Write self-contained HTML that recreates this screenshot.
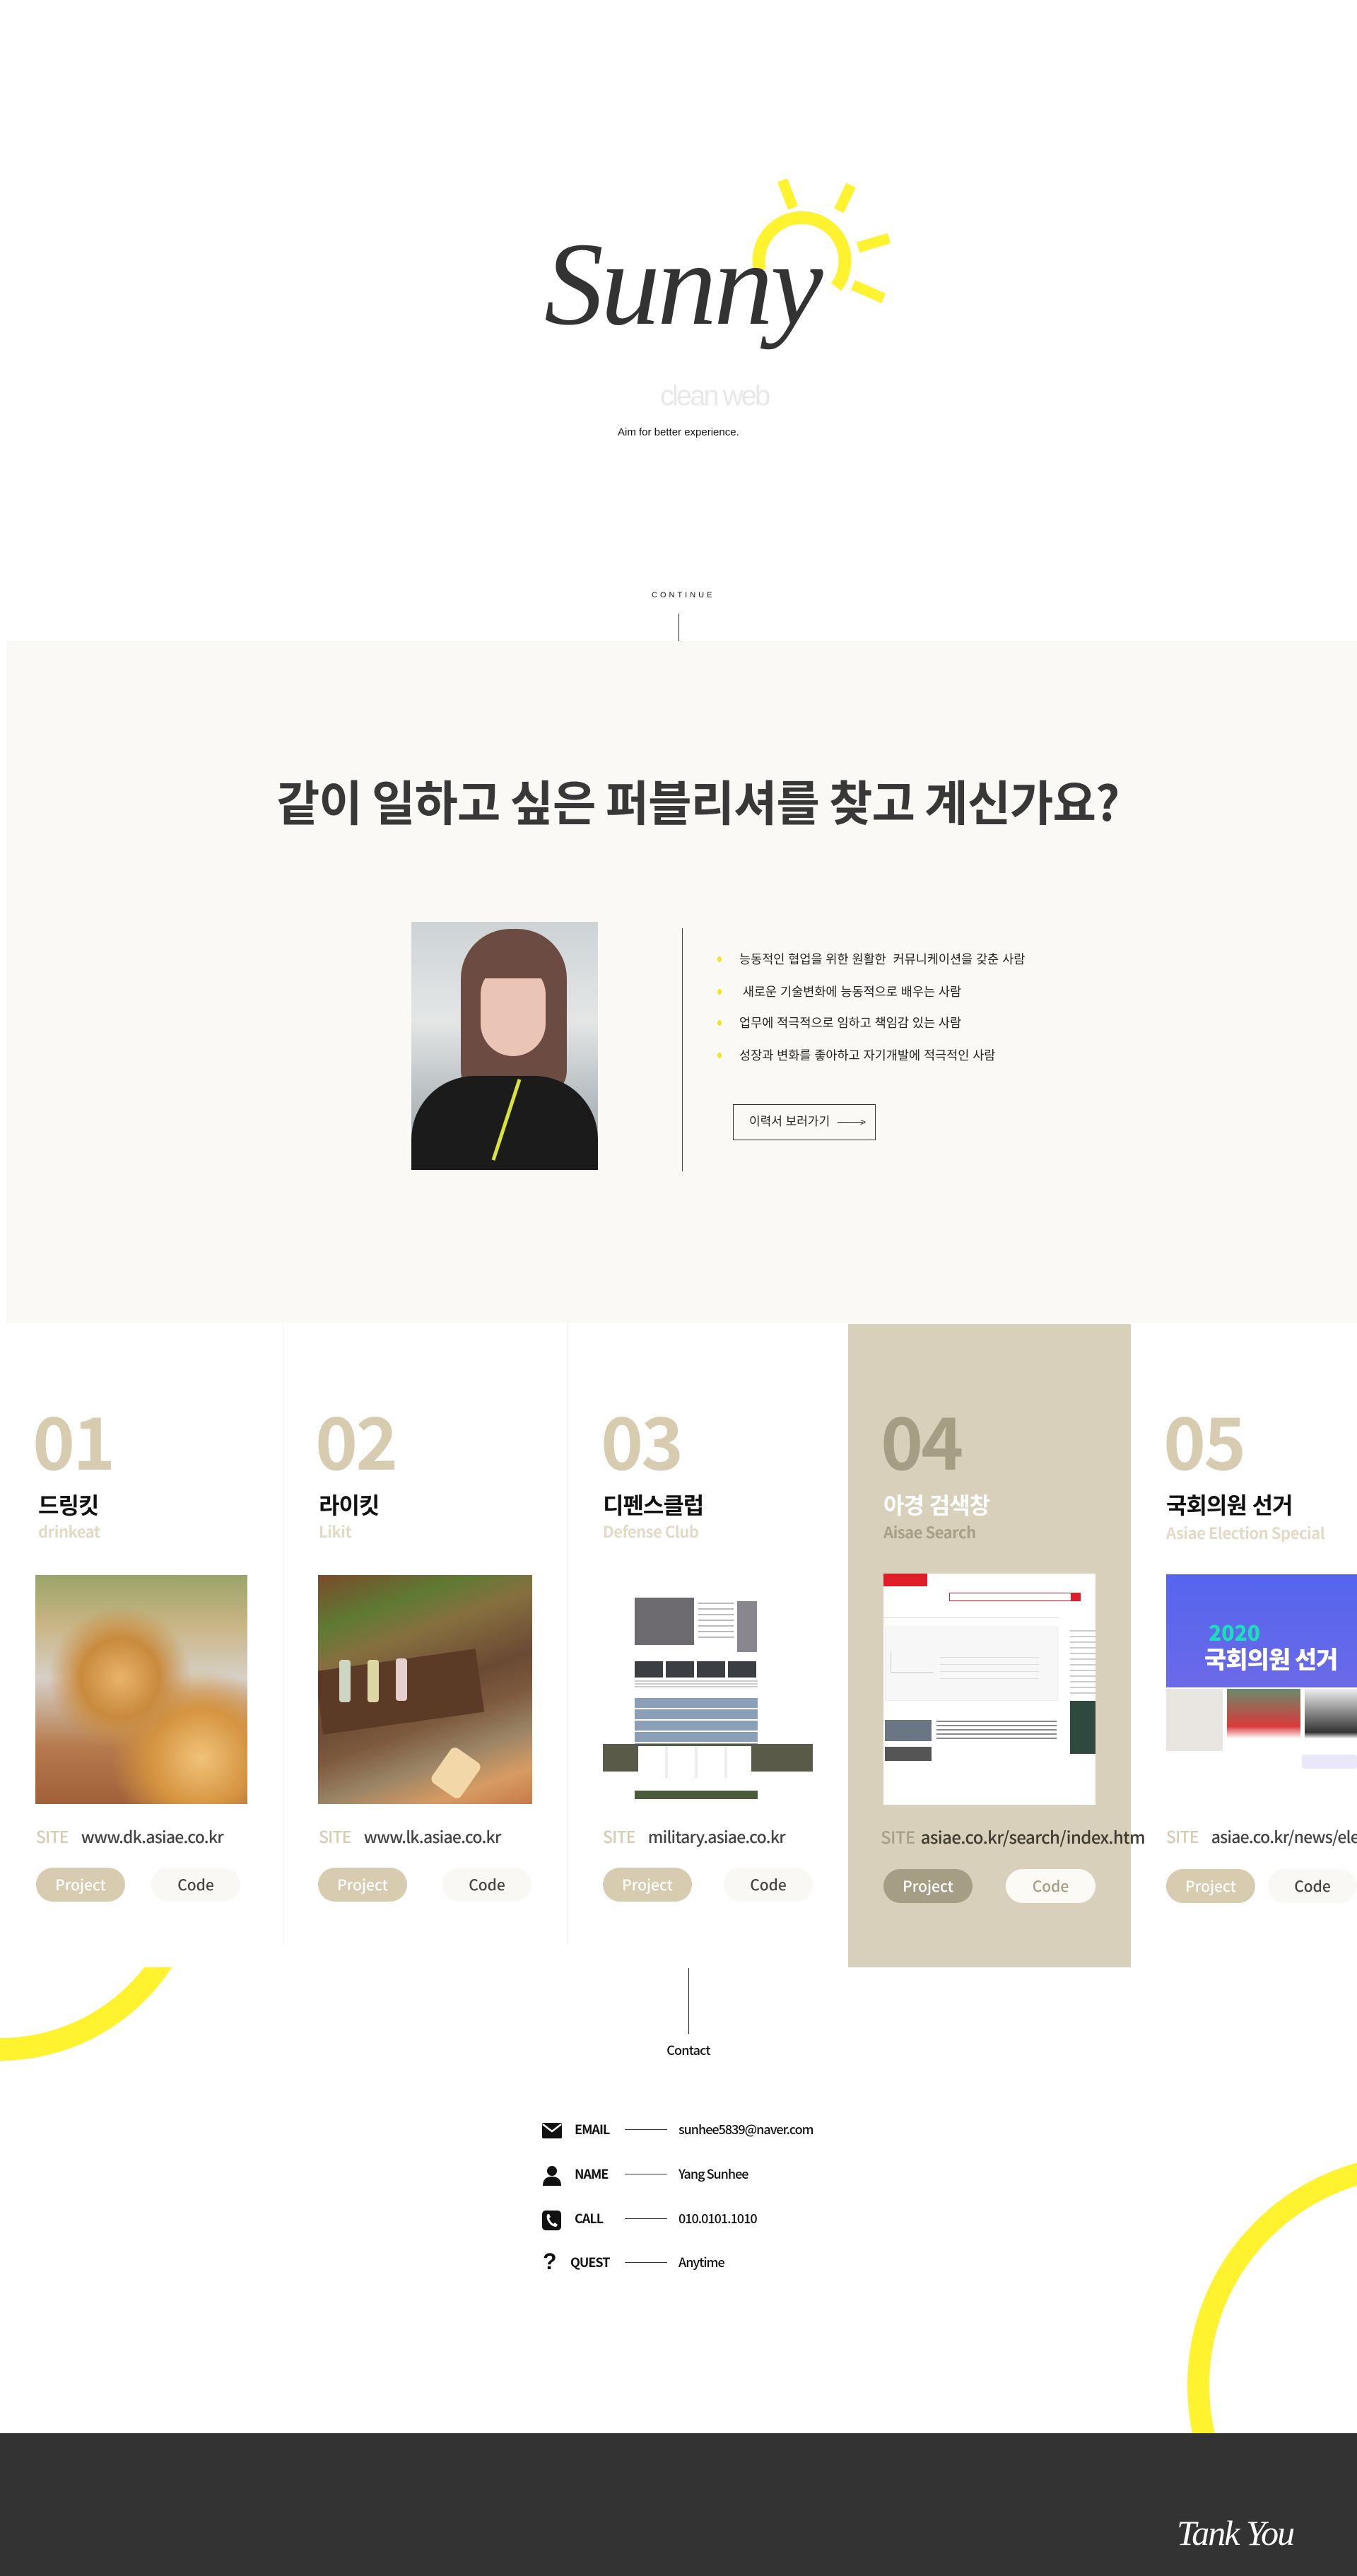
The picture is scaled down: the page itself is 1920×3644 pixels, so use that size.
<!DOCTYPE html>
<html><head><meta charset="utf-8">
<style>
*{margin:0;padding:0;box-sizing:border-box}
html,body{width:1920px;height:3644px;overflow:hidden;background:#fff}
body{position:relative;font-family:"Liberation Sans","Noto Sans CJK KR",sans-serif;color:#222}
.a{position:absolute}
.num{position:absolute;font-family:"Noto Sans CJK KR","Liberation Sans",sans-serif;font-weight:700;font-size:102px;line-height:1;color:#d8ccb0;letter-spacing:-3px}
.ttl{position:absolute;font-family:"Liberation Sans","Noto Sans CJK KR",sans-serif;font-weight:700;font-size:32px;line-height:1;color:#111;letter-spacing:-1px}
.sub{position:absolute;font-family:"Noto Sans CJK KR",sans-serif;font-weight:700;font-size:22px;line-height:1;color:#e3dac6;letter-spacing:-0.5px}
.site{position:absolute;font-family:"Noto Sans CJK KR",sans-serif;font-weight:500;font-size:23px;line-height:1;color:#444;letter-spacing:-0.8px;white-space:nowrap}
.site b{color:#d8ccb0;font-weight:500;margin-right:18px}
.btn{position:absolute;height:48px;width:126px;border-radius:24px;font-family:"Noto Sans CJK KR",sans-serif;font-weight:500;font-size:21px;line-height:48px;text-align:center}
.pj{background:#d8ccb0;color:#fff}
.cd{background:#faf8f4;color:#444}
.img{position:absolute;overflow:hidden}
.li{position:absolute;left:1046px;font-family:"Liberation Sans","Noto Sans CJK KR",sans-serif;font-size:17.5px;color:#222;white-space:nowrap}
.dot{position:absolute;left:1015px;width:6px;height:8px;border-radius:50%;background:#f7e619}
.crow{position:absolute;left:760px;height:30px;width:600px;font-family:"Noto Sans CJK KR",sans-serif;font-weight:700;font-size:18px;letter-spacing:-1px;color:#111}
.crow .lb{position:absolute;left:53px;top:0;line-height:30px}
.crow .ln{position:absolute;left:124px;top:15px;width:60px;height:1px;background:#333}
.crow .vl{position:absolute;left:200px;top:0;line-height:30px;font-weight:500}
.crow svg{position:absolute;left:6px;top:3px}
</style></head><body>

<!-- HERO -->
<svg class="a" style="left:0;top:0" width="1920" height="560">
  <g stroke="#fff22e" fill="none">
    <path d="M1075 382 A61 61 0 1 1 1183 406" stroke-width="18"/>
    <line x1="1107" y1="255" x2="1122" y2="294" stroke-width="15"/>
    <line x1="1204" y1="262" x2="1187" y2="298" stroke-width="15"/>
    <line x1="1258" y1="337" x2="1214" y2="350" stroke-width="15"/>
    <line x1="1207" y1="403" x2="1250" y2="422" stroke-width="15"/>
  </g>
</svg>
<div class="a" style="left:770px;top:318px;font-family:'Liberation Serif',serif;font-style:italic;font-size:168px;line-height:1;color:#333;letter-spacing:-4px">Sunny</div>
<div class="a" style="left:934px;top:540px;font-family:'Liberation Sans',sans-serif;font-size:40px;line-height:1;color:#e8e8e8;letter-spacing:-3px">clean web</div>
<div class="a" style="left:874px;top:603px;font-size:15px;color:#111">Aim for better experience.</div>
<div class="a" style="left:922px;top:836px;font-size:11px;letter-spacing:4px;color:#111">CONTINUE</div>
<div class="a" style="left:960px;top:868px;width:1px;height:40px;background:#222"></div>

<!-- ABOUT -->
<div class="a" style="left:9px;top:907px;width:1911px;height:965px;background:#faf9f5"></div>
<div class="a" style="left:27px;top:1092px;width:1920px;text-align:center">
  <span style="display:inline-block;font-family:'Noto Sans CJK KR',sans-serif;font-weight:700;font-size:68px;line-height:80px;color:#383838;letter-spacing:-1px;transform:scaleX(0.982)">같이 일하고 싶은 퍼블리셔를 찾고 계신가요?</span>
</div>
<div class="img" style="left:582px;top:1304px;width:264px;height:351px;background:linear-gradient(180deg,#cdd3d6 0%,#e4e6e6 40%,#b8bfc2 70%,#9aa0a2 100%)">
  <div class="a" style="left:70px;top:10px;width:150px;height:240px;border-radius:70px 70px 40px 40px;background:#6b4b42"></div>
  <div class="a" style="left:98px;top:60px;width:92px;height:130px;border-radius:46px 46px 50px 50px;background:#eac4b5"></div>
  <div class="a" style="left:90px;top:40px;width:110px;height:40px;border-radius:50px 50px 10px 10px;background:#6b4b42"></div>
  <div class="a" style="left:0;top:218px;width:264px;height:140px;border-radius:90px 90px 0 0;background:#1b1b1b"></div>
  <div class="a" style="left:132px;top:220px;width:5px;height:120px;background:#d9e23a;transform:rotate(18deg)"></div>
</div>
<div class="a" style="left:965px;top:1313px;width:1px;height:344px;background:#444"></div>
<div class="dot" style="top:1353px"></div><div class="li" style="top:1344px">능동적인 협업을 위한 원활한&nbsp; 커뮤니케이션을 갖춘 사람</div>
<div class="dot" style="top:1399px"></div><div class="li" style="top:1390px">&nbsp;새로운 기술변화에 능동적으로 배우는 사람</div>
<div class="dot" style="top:1443px"></div><div class="li" style="top:1434px">업무에 적극적으로 임하고 책임감 있는 사람</div>
<div class="dot" style="top:1489px"></div><div class="li" style="top:1480px">성장과 변화를 좋아하고 자기개발에 적극적인 사람</div>
<div class="a" style="left:1037px;top:1562px;width:202px;height:51px;border:1.5px solid #333;font-size:17px;line-height:48px;padding-left:22px;color:#222">이력서 보러가기 <span style="display:inline-block;width:36px;height:1px;background:#222;vertical-align:middle;margin-left:6px"></span><span style="font-size:14px;margin-left:-4px">&gt;</span></div>

<!-- PROJECTS -->
<div class="a" style="left:400px;top:1873px;width:1px;height:880px;background:#f4f2ed"></div>
<div class="a" style="left:802px;top:1873px;width:1px;height:880px;background:#f4f2ed"></div>
<div class="a" style="left:1200px;top:1873px;width:400px;height:910px;background:#d9d0bb"></div>

<div class="num" style="left:46px;top:1985px">01</div>
<div class="ttl" style="left:54px;top:2114px">드링킷</div>
<div class="sub" style="left:54px;top:2155px">drinkeat</div>
<div class="img" style="left:50px;top:2228px;width:300px;height:324px;background:radial-gradient(circle at 40% 45%,#e8b36a 0,#c98a3c 22%,transparent 40%),radial-gradient(circle at 78% 80%,#f0c27a 0,#d59440 20%,transparent 36%),linear-gradient(180deg,#9aa56a 0%,#c9b585 22%,#d6d0c6 45%,#b57a4c 75%,#a0603a 100%)"></div>
<div class="site" style="left:51px;top:2586px"><b>SITE</b>www.dk.asiae.co.kr</div>
<div class="btn pj" style="left:51px;top:2642px">Project</div>
<div class="btn cd" style="left:214px;top:2642px">Code</div>

<div class="num" style="left:446px;top:1985px">02</div>
<div class="ttl" style="left:451px;top:2114px">라이킷</div>
<div class="sub" style="left:451px;top:2155px">Likit</div>
<div class="img" style="left:450px;top:2228px;width:303px;height:324px;background:linear-gradient(160deg,#7a4a2c 0%,#5f7a33 18%,#86703f 30%,#6b4a34 50%,#7d5a3e 62%,#9a8466 75%,#d79b63 88%,#c77a47 100%)">
  <div class="a" style="left:0;top:120px;width:230px;height:90px;background:#5b3a26;transform:rotate(-8deg)"></div>
  <div class="a" style="left:30px;top:120px;width:16px;height:60px;background:#cdd6c2;border-radius:4px"></div>
  <div class="a" style="left:70px;top:120px;width:16px;height:60px;background:#dcd6a4;border-radius:4px"></div>
  <div class="a" style="left:110px;top:118px;width:16px;height:60px;background:#e5cfd0;border-radius:4px"></div>
  <div class="a" style="left:170px;top:250px;width:50px;height:60px;background:#f2d7a8;border-radius:8px;transform:rotate(35deg)"></div>
</div>
<div class="site" style="left:451px;top:2586px"><b>SITE</b>www.lk.asiae.co.kr</div>
<div class="btn pj" style="left:450px;top:2642px">Project</div>
<div class="btn cd" style="left:626px;top:2642px">Code</div>

<div class="num" style="left:850px;top:1985px">03</div>
<div class="ttl" style="left:853px;top:2114px">디펜스클럽</div>
<div class="sub" style="left:853px;top:2155px">Defense Club</div>
<div class="img" style="left:853px;top:2227px;width:297px;height:325px;background:#fff">
  <div class="a" style="left:45px;top:33px;width:84px;height:67px;background:#6d6b70"></div>
  <div class="a" style="left:190px;top:38px;width:28px;height:72px;background:#8a8690"></div>
  <div class="a" style="left:135px;top:40px;width:50px;height:50px;background:repeating-linear-gradient(180deg,#bbb 0 2px,#fff 2px 8px)"></div>
  <div class="a" style="left:45px;top:123px;width:174px;height:23px;background:repeating-linear-gradient(90deg,#3b3e42 0 40px,#fff 40px 44px)"></div>
  <div class="a" style="left:45px;top:150px;width:174px;height:12px;background:repeating-linear-gradient(180deg,#ccc 0 2px,#fff 2px 4px)"></div>
  <div class="a" style="left:45px;top:175px;width:174px;height:70px;background:repeating-linear-gradient(180deg,#8aa0b8 0 14px,#fff 14px 16px)"></div>
  <div class="a" style="left:0;top:240px;width:297px;height:39px;background:#5a5a48"></div>
  <div class="a" style="left:50px;top:243px;width:160px;height:45px;background:repeating-linear-gradient(90deg,#fff 0 38px,#eee 38px 42px)"></div>
  <div class="a" style="left:45px;top:306px;width:174px;height:12px;background:#4a5a3a"></div>
</div>
<div class="site" style="left:853px;top:2586px"><b>SITE</b>military.asiae.co.kr</div>
<div class="btn pj" style="left:853px;top:2642px">Project</div>
<div class="btn cd" style="left:1024px;top:2642px">Code</div>

<div class="num" style="left:1246px;top:1985px;color:#a69d85">04</div>
<div class="ttl" style="left:1250px;top:2114px;color:#fff">아경 검색창</div>
<div class="sub" style="left:1250px;top:2156px;color:#a89f87">Aisae Search</div>
<div class="img" style="left:1250px;top:2226px;width:300px;height:327px;background:#fff">
  <div class="a" style="left:0;top:0;width:62px;height:18px;background:#e01e28"></div>
  <div class="a" style="left:93px;top:27px;width:185px;height:12px;border:1px solid #e01e28"></div>
  <div class="a" style="left:265px;top:27px;width:14px;height:12px;background:#e01e28"></div>
  <div class="a" style="left:0;top:62px;width:248px;height:1px;background:#ddd"></div>
  <div class="a" style="left:2px;top:75px;width:245px;height:105px;background:#f7f7f7;border:1px solid #eee"></div>
  <div class="a" style="left:10px;top:110px;width:60px;height:30px;border-left:1px solid #ccc;border-bottom:1px solid #ccc"></div>
  <div class="a" style="left:80px;top:118px;width:140px;height:40px;background:repeating-linear-gradient(180deg,#ddd 0 1px,#f7f7f7 1px 10px)"></div>
  <div class="a" style="left:264px;top:80px;width:36px;height:90px;background:repeating-linear-gradient(180deg,#ccc 0 2px,#fff 2px 8px)"></div>
  <div class="a" style="left:264px;top:180px;width:36px;height:75px;background:#2e4a3e"></div>
  <div class="a" style="left:2px;top:207px;width:66px;height:30px;background:#6b7684"></div>
  <div class="a" style="left:75px;top:208px;width:170px;height:26px;background:repeating-linear-gradient(180deg,#888 0 2px,#fff 2px 6px)"></div>
  <div class="a" style="left:2px;top:245px;width:66px;height:20px;background:#555"></div>
</div>
<div class="site" style="left:1246px;top:2586px;font-size:24px;color:#3e3a30;letter-spacing:-0.6px"><b style="color:#a89f87;margin-right:8px">SITE</b>asiae.co.kr/search/index.htm</div>
<div class="btn pj" style="left:1250px;top:2644px;background:#a69d85">Project</div>
<div class="btn cd" style="left:1423px;top:2644px;background:#fbfaf5;color:#a69d85;width:127px">Code</div>

<div class="num" style="left:1646px;top:1985px">05</div>
<div class="ttl" style="left:1650px;top:2114px">국회의원 선거</div>
<div class="sub" style="left:1650px;top:2157px">Asiae Election Special</div>
<div class="img" style="left:1650px;top:2227px;width:270px;height:323px;background:#fff">
  <div class="a" style="left:0;top:0;width:270px;height:160px;background:linear-gradient(180deg,#5565ee,#6a6ae8)"></div>
  <div class="a" style="left:60px;top:66px;font-family:'Noto Sans CJK KR',sans-serif;font-weight:900;font-size:30px;line-height:1;color:#19e0b8">2020</div>
  <div class="a" style="left:54px;top:102px;font-family:'Noto Sans CJK KR',sans-serif;font-weight:900;font-size:34px;line-height:1;color:#fff;letter-spacing:-1px">국회의원 선거</div>
  <div class="a" style="left:0;top:162px;width:80px;height:88px;background:#e9e6e2"></div>
  <div class="a" style="left:86px;top:162px;width:104px;height:88px;background:linear-gradient(180deg,#6a8b6a,#d93a3a 60%,#fff 80%)"></div>
  <div class="a" style="left:196px;top:162px;width:74px;height:88px;background:linear-gradient(180deg,#eee,#333 70%,#fff 80%)"></div>
  <div class="a" style="left:192px;top:255px;width:78px;height:20px;border-radius:4px;background:#e9e8fb"></div>
</div>
<div class="site" style="left:1650px;top:2586px"><b>SITE</b>asiae.co.kr/news/election</div>
<div class="btn pj" style="left:1650px;top:2644px">Project</div>
<div class="btn cd" style="left:1794px;top:2644px">Code</div>

<!-- decorative arcs -->
<div class="a" style="left:0;top:2783px;width:400px;height:200px;overflow:hidden">
  <div class="a" style="left:-290px;top:-448px;width:580px;height:580px;border-radius:50%;border:32px solid #fff22e"></div>
</div>
<div class="a" style="left:1600px;top:3000px;width:320px;height:442px;overflow:hidden">
  <div class="a" style="left:80px;top:48px;width:652px;height:652px;border-radius:50%;border:31px solid #fff22e"></div>
</div>

<!-- CONTACT -->
<div class="a" style="left:974px;top:2784px;width:1px;height:93px;background:#222"></div>
<div class="a" style="left:874px;top:2887px;width:200px;text-align:center;font-family:'Noto Sans CJK KR',sans-serif;font-weight:500;font-size:18px;letter-spacing:-0.8px;color:#111">Contact</div>

<div class="crow" style="top:2997px">
  <svg width="30" height="26" viewBox="0 0 30 26"><rect x="1" y="3" width="28" height="22" rx="2" fill="#111"/><path d="M2 5 L15 15 L28 5" stroke="#fff" stroke-width="2.5" fill="none"/></svg>
  <span class="lb">EMAIL</span><span class="ln"></span><span class="vl">sunhee5839@naver.com</span>
</div>
<div class="crow" style="top:3060px">
  <svg width="30" height="30" viewBox="0 0 30 30"><circle cx="15" cy="8" r="7" fill="#111"/><path d="M2 29 C2 19 8 16 15 16 C22 16 28 19 28 29 Z" fill="#111"/></svg>
  <span class="lb">NAME</span><span class="ln"></span><span class="vl">Yang Sunhee</span>
</div>
<div class="crow" style="top:3123px">
  <svg width="30" height="30" viewBox="0 0 30 30"><rect x="1" y="1" width="27" height="28" rx="5" fill="#111"/><path d="M9 6 C7 8 7 12 10 17 C13 22 17 24 21 24 L23 21 L19 18 L17 20 C14 18 12 15 11 12 L13 10 L11 6 Z" fill="#fff"/></svg>
  <span class="lb">CALL</span><span class="ln"></span><span class="vl">010.0101.1010</span>
</div>
<div class="crow" style="top:3185px">
  <span style="position:absolute;left:8px;top:-4px;font-size:32px;font-weight:900;font-family:'Liberation Sans',sans-serif;color:#111">?</span>
  <span class="lb" style="left:47px">QUEST</span><span class="ln"></span><span class="vl">Anytime</span>
</div>

<!-- FOOTER -->
<div class="a" style="left:0;top:3442px;width:1920px;height:202px;background:#333"></div>
<div class="a" style="left:1665px;top:3558px;font-family:'Liberation Serif',serif;font-style:italic;font-size:50px;line-height:1;color:#fff;letter-spacing:-2px">Tank You</div>
</body></html>
